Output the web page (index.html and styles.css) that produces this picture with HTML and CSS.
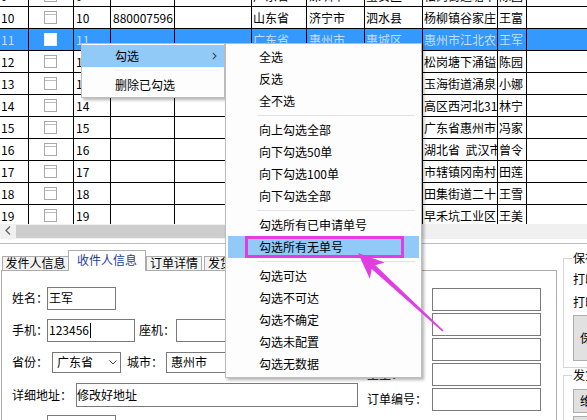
FILE: index.html
```html
<!DOCTYPE html>
<html lang="zh-CN">
<head>
<meta charset="utf-8">
<title>勾选菜单</title>
<link rel="stylesheet" href="styles.css">
</head>
<body>
<div class="app">
  <div class="rows">
    <div class="rows-in">
      <div class="row"><div class="c k1">9</div><div class="c k2"><span class="cb"></span></div><div class="c k3">9</div><div class="c k4"></div><div class="c k5"></div><div class="c k6">广东省</div><div class="c k7">深圳市</div><div class="c k8">宝安区</div><div class="c k9">松岗街道塘下</div><div class="c k10">陈园</div><div class="c k11"></div></div>
      <div class="row"><div class="c k1">10</div><div class="c k2"><span class="cb"></span></div><div class="c k3">10</div><div class="c k4">88000759612</div><div class="c k5"></div><div class="c k6">山东省</div><div class="c k7">济宁市</div><div class="c k8">泗水县</div><div class="c k9">杨柳镇谷家庄</div><div class="c k10">王富</div><div class="c k11"></div></div>
      <div class="row sel"><div class="c k1">11</div><div class="c k2"><span class="cb"></span></div><div class="c k3">11</div><div class="c k4"></div><div class="c k5"></div><div class="c k6">广东省</div><div class="c k7">惠州市</div><div class="c k8">惠城区</div><div class="c k9">惠州市江北农</div><div class="c k10">王军</div><div class="c k11"></div></div>
      <div class="row"><div class="c k1">12</div><div class="c k2"><span class="cb"></span></div><div class="c k3">12</div><div class="c k4"></div><div class="c k5"></div><div class="c k6"></div><div class="c k7"></div><div class="c k8"></div><div class="c k9">松岗塘下涌镒</div><div class="c k10">陈园</div><div class="c k11"></div></div>
      <div class="row"><div class="c k1">13</div><div class="c k2"><span class="cb"></span></div><div class="c k3">13</div><div class="c k4"></div><div class="c k5"></div><div class="c k6"></div><div class="c k7"></div><div class="c k8"></div><div class="c k9">玉海街道涌泉</div><div class="c k10">小娜</div><div class="c k11"></div></div>
      <div class="row"><div class="c k1">14</div><div class="c k2"><span class="cb"></span></div><div class="c k3">14</div><div class="c k4"></div><div class="c k5"></div><div class="c k6"></div><div class="c k7"></div><div class="c k8"></div><div class="c k9">高区西河北31</div><div class="c k10">林宁</div><div class="c k11"></div></div>
      <div class="row"><div class="c k1">15</div><div class="c k2"><span class="cb"></span></div><div class="c k3">15</div><div class="c k4"></div><div class="c k5"></div><div class="c k6"></div><div class="c k7"></div><div class="c k8"></div><div class="c k9">广东省惠州市</div><div class="c k10">冯家</div><div class="c k11"></div></div>
      <div class="row"><div class="c k1">16</div><div class="c k2"><span class="cb"></span></div><div class="c k3">16</div><div class="c k4"></div><div class="c k5"></div><div class="c k6"></div><div class="c k7"></div><div class="c k8"></div><div class="c k9">湖北省  武汉市</div><div class="c k10">曾令</div><div class="c k11"></div></div>
      <div class="row"><div class="c k1">17</div><div class="c k2"><span class="cb"></span></div><div class="c k3">17</div><div class="c k4"></div><div class="c k5"></div><div class="c k6"></div><div class="c k7"></div><div class="c k8"></div><div class="c k9">市辖镇冈南村</div><div class="c k10">田莲</div><div class="c k11"></div></div>
      <div class="row"><div class="c k1">18</div><div class="c k2"><span class="cb"></span></div><div class="c k3">18</div><div class="c k4"></div><div class="c k5"></div><div class="c k6"></div><div class="c k7"></div><div class="c k8"></div><div class="c k9">田集街道二十</div><div class="c k10">王雪</div><div class="c k11"></div></div>
      <div class="row"><div class="c k1">19</div><div class="c k2"><span class="cb"></span></div><div class="c k3">19</div><div class="c k4"></div><div class="c k5"></div><div class="c k6"></div><div class="c k7"></div><div class="c k8"></div><div class="c k9">早禾坑工业区</div><div class="c k10">王美</div><div class="c k11"></div></div>
    </div>
  </div>
  <div class="hscroll">
    <div class="sbtn"><svg width="6" height="9" viewBox="0 0 6 9"><path d="M5 0.5 L1 4.5 L5 8.5" fill="none" stroke="#606060" stroke-width="1.3"/></svg></div>
    <div class="thumb"></div>
  </div>

  <div class="bottom">
    <div class="tabctl">
      <div class="tabs">
        <div class="tab t1">发件人信息</div>
        <div class="tab t2 on">收件人信息</div>
        <div class="tab t3">订单详情</div>
        <div class="tab t4">发货人信息</div>
      </div>
      <div class="page">
        <div class="fl">
          <div class="frow r1"><span class="lbl w35">姓名：</span><span class="inp w69">王军</span></div>
          <div class="frow r2"><span class="lbl w35">手机：</span><span class="inp w88">123456<span class="caret"></span></span><span class="lbl w37 ml4">座机：</span><span class="inp w120"></span></div>
          <div class="frow r3"><span class="lbl w40">省份：</span><span class="dd w69"><span>广东省</span><svg width="8" height="5" viewBox="0 0 8 5"><path d="M0.5 0.5 L4 4 L7.5 0.5" fill="none" stroke="#444" stroke-width="1"/></svg></span><span class="lbl w39 ml6">城市：</span><span class="dd w130"><span>惠州市</span></span></div>
          <div class="frow r4"><span class="lbl w64">详细地址：</span><span class="inp w282">修改好地址</span></div>
          <div class="frow r5"><span class="lbl w35"></span><span class="inp w69"></span></div>
        </div>
        <div class="fr">
          <div class="frow q"><span class="lbl w65">收件邮编：</span><span class="inp w109"></span></div>
          <div class="frow q"><span class="lbl w65">身份证号：</span><span class="inp w109"></span></div>
          <div class="frow q"><span class="lbl w65">公司名称：</span><span class="inp w109"></span></div>
          <div class="frow q"><span class="lbl w65">重量：</span><span class="inp w109"></span></div>
          <div class="frow q"><span class="lbl w65">订单编号：</span><span class="inp w109"></span></div>
        </div>
      </div>
    </div>
    <div class="side">
      <fieldset class="gb g1">
        <legend>保存设置</legend>
        <div class="gline first">打印机：</div>
        <div class="gline">打印份数：</div>
        <div class="btn tall">保存</div>
      </fieldset>
      <fieldset class="gb g2">
        <legend>发货设置</legend>
        <div class="btn b1">维护发货人</div>
        <div class="btn b2">导入</div>
      </fieldset>
    </div>
  </div>

  <div class="menu main">
    <div class="mi hot"><span>勾选</span><svg width="5" height="8" viewBox="0 0 5 8"><path d="M0.8 0.8 L4 4 L0.8 7.2" fill="none" stroke="#444" stroke-width="1.1"/></svg></div>
    <div class="sep"></div>
    <div class="mi">删除已勾选</div>
  </div>

  <div class="menu sub">
    <div class="mi">全选</div>
    <div class="mi">反选</div>
    <div class="mi">全不选</div>
    <div class="sep"></div>
    <div class="mi">向上勾选全部</div>
    <div class="mi">向下勾选50单</div>
    <div class="mi">向下勾选100单</div>
    <div class="mi">向下勾选全部</div>
    <div class="sep"></div>
    <div class="mi">勾选所有已申请单号</div>
    <div class="mi hot">勾选所有无单号</div>
    <div class="sep"></div>
    <div class="mi">勾选可达</div>
    <div class="mi">勾选不可达</div>
    <div class="mi">勾选不确定</div>
    <div class="mi">勾选未配置</div>
    <div class="mi">勾选无数据</div>
  </div>

  <div class="callout"></div>
  <svg class="arrow" width="587" height="420" viewBox="0 0 587 420">
    <polygon fill="#e23de2" points="358,253 384.6,262.5 375.3,265.3 443.6,330.4 442.3,331.6 371.7,269.1 369.8,278.7"/>
  </svg>
</div>
</body>
</html>
```

FILE: styles.css
```css
* { box-sizing: border-box; }
html, body { margin: 0; padding: 0; }
body {
  width: 587px;
  height: 420px;
  overflow: hidden;
  background: #fff;
  color: #000;
  font-family: "Noto Sans CJK SC", "Microsoft YaHei", sans-serif;
  font-size: 12px;
  line-height: 1.2;
}
.app { position: relative; width: 587px; height: 420px; overflow: hidden; }

/* grid */
.rows { height: 224px; overflow: hidden; }
.rows-in { margin-top: -15px; }
.row { display: flex; height: 22px; border-bottom: 1px solid #000; }
.c {
  flex: none;
  height: 21px;
  line-height: 21px;
  padding-left: 1px;
  border-right: 1px solid #000;
  white-space: pre;
  overflow: hidden;
}
.k1 { width: 29px; }
.k2 { width: 45px; display: flex; align-items: center; justify-content: center; padding: 0 2px 0 0; }
.k3 { width: 37px; padding-left: 2px; }
.k4 { width: 64px; padding-left: 2px; }
.k5 { width: 77px; }
.k6 { width: 55px; }
.k7 { width: 58px; padding-left: 2px; }
.k8 { width: 58px; }
.k9 { width: 75px; }
.k10 { width: 29px; }
.k11 { flex: 1; border-right: 0; }
.cb {
  display: block;
  width: 13px;
  height: 13px;
  border: 1px solid #a9a9a9;
  background: #fff;
  box-shadow: inset 0 2px 0 #fff, inset 0 3px 0 #bdbdbd;
}
.row.sel { background: #3399ff; color: #c4ddfb; }
.row.sel .cb { border-color: #e8f1fc; box-shadow: none; }

/* scrollbar */
.hscroll { display: flex; height: 15px; background: #f0f0f0; }
.sbtn { width: 15px; flex: none; display: flex; align-items: center; justify-content: center; padding-bottom: 3px; }
.thumb { width: 320px; flex: none; margin: 1px 0 1px 1px; background: #cdcdcd; }

/* bottom */
.bottom { display: flex; margin-top: 4px; border-top: 1px solid #bdbdbd; padding-top: 6px; }
.tabctl { width: 556px; margin-left: 1px; flex: none; }
.tabs { display: flex; align-items: flex-end; height: 20px; padding-left: 1px; position: relative; z-index: 1; }
.tab {
  flex: none;
  height: 14px;
  line-height: 12px;
  border: 1px solid #acacac;
  border-bottom: 0;
  background: #f3f3f3;
  text-align: center;
  white-space: nowrap;
  overflow: hidden;
}
.t1 { width: 67px; }
.t2 { width: 78px; margin-left: -1px; }
.t3 { width: 56px; }
.t4 { width: 66px; margin-left: 2px; text-align: left; padding-left: 3px; }
.tab.on { height: 21px; margin-bottom: -1px; background: #fff; line-height: 18px; color: #1c3c9c; }
.page { border: 1px solid #acacac; background: #fff; height: 200px; display: flex; }

.fl { width: 356px; flex: none; padding: 16px 0 0 10px; }
.fr { flex: none; padding-top: 17px; margin-left: 9px; }
.frow { display: flex; align-items: center; }
.lbl { flex: none; white-space: nowrap; overflow: hidden; }
.inp {
  flex: none;
  display: flex;
  align-items: center;
  height: 23px;
  border: 1px solid #7a7a7a;
  background: #fff;
  padding-left: 1px;
  white-space: nowrap;
  overflow: hidden;
}
.dd {
  flex: none;
  display: flex;
  align-items: center;
  justify-content: space-between;
  height: 21px;
  border: 1px solid #7a7a7a;
  background: #fff;
  padding: 0 3px 0 4px;
}
.caret { display: inline-block; width: 1px; height: 15px; background: #000; margin-left: 1px; }
.r1 .inp { height: 23px; }
.r2 { margin-top: 9px; }
.r3 { margin-top: 10px; }
.r4 { margin-top: 10px; }
.r4 .inp { height: 24px; padding-left: 0; }
.r5 { margin-top: 8px; }
.q + .q { margin-top: 2px; }
.w35 { width: 35px; }
.w37 { width: 37px; }
.w39 { width: 39px; }
.w40 { width: 40px; }
.w64 { width: 64px; }
.w65 { width: 65px; }
.w69 { width: 69px; }
.w88 { width: 88px; }
.w109 { width: 109px; }
.w120 { width: 120px; }
.w130 { width: 130px; }
.w282 { width: 282px; }
.ml4 { margin-left: 4px; }
.ml6 { margin-left: 6px; }

/* side group boxes */
.side { flex: none; width: 120px; margin-left: 6px; padding-top: 1px; }
.gb { margin: 0; padding: 0 0 6px 8px; border: 1px solid #d5d5d5; border-right: 0; min-width: 0; }
.gb legend { padding: 0 1px; line-height: 14px; white-space: nowrap; }
.gline { line-height: 23px; padding-left: 1px; white-space: nowrap; }
.gline.first { margin-top: 2px; }
.btn {
  display: flex;
  align-items: center;
  width: 90px;
  height: 23px;
  margin-left: 1px;
  padding-left: 6px;
  background: #e1e1e1;
  border: 1px solid #adadad;
  white-space: nowrap;
}
.btn.tall { height: 46px; margin-top: 2px; }
.g2 { padding-bottom: 20px; }
.btn.b1 { margin-top: 7px; height: 24px; }
.btn.b2 { margin-top: 3px; }

/* context menus */
.menu {
  position: absolute;
  top: 43px;
  background: #fdfdfd;
  border: 1px solid #bdbdbd;
  box-shadow: 2px 2px 3px rgba(0, 0, 0, 0.3);
  z-index: 5;
}
.main { left: 81px; width: 144px; padding: 1px 0; }
.sub { left: 225px; width: 197px; padding: 2px; }
.mi { height: 22px; line-height: 22px; white-space: nowrap; }
.main .mi { padding-left: 33px; padding-right: 7px; display: flex; align-items: center; justify-content: space-between; }
.sub .mi { padding-left: 31px; }
.mi.hot { background: #91c9f7; }
.sep { height: 7px; display: flex; align-items: center; }
.sep::before { content: ""; flex: 1; height: 1px; background: #e2e2e2; margin: 0 4px 0 29px; }
.main .sep::before { background: #f0f0f0; margin-left: 32px; }

.callout {
  position: absolute;
  left: 245px;
  top: 236px;
  width: 159px;
  height: 22px;
  border: 3px solid #e23de2;
  z-index: 6;
}
.arrow { position: absolute; left: 0; top: 0; z-index: 7; pointer-events: none; }
```
